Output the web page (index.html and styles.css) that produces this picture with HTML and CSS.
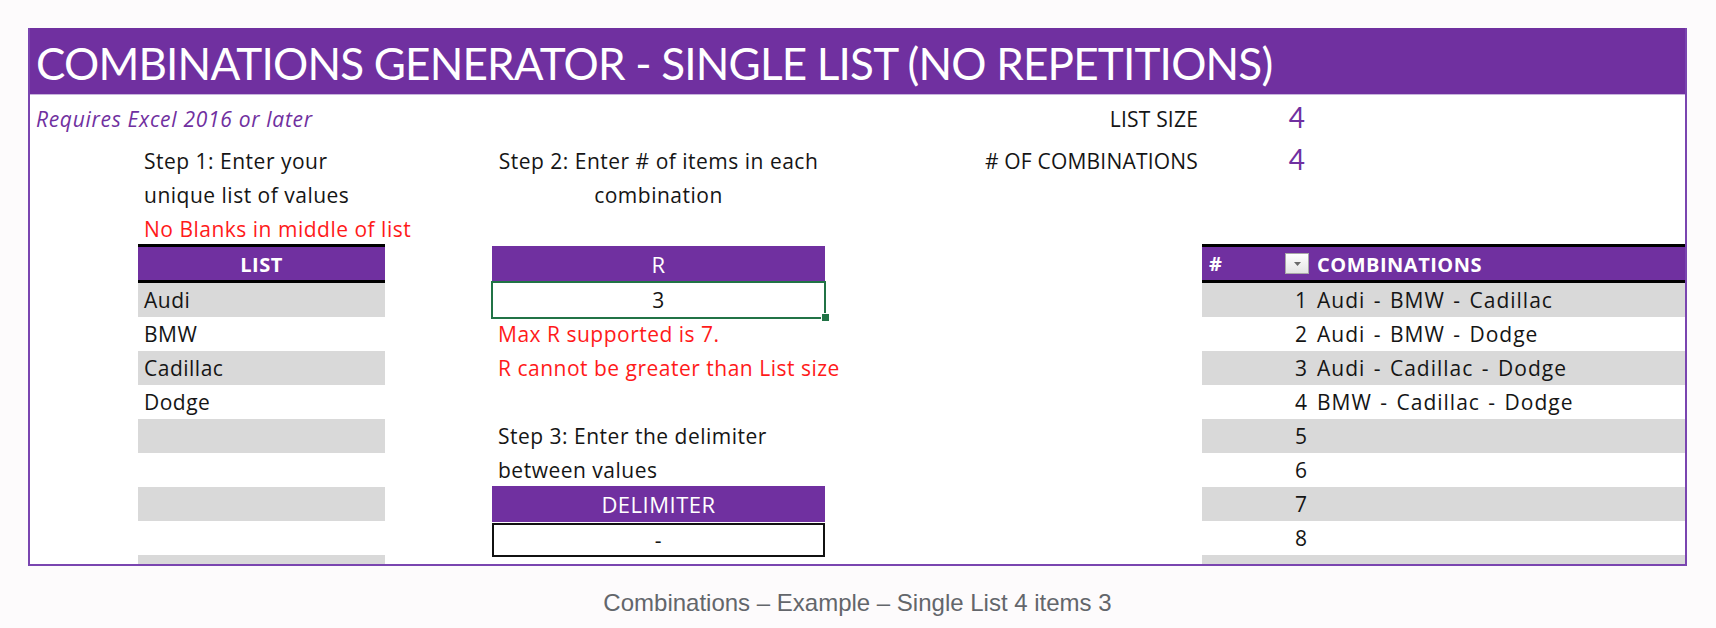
FILE: index.html
```html
<!DOCTYPE html>
<html>
<head>
<meta charset="utf-8">
<link rel="stylesheet" href="styles.css">
</head>
<body>
<figure class="fig">
  <div class="sheet">
    <div class="rowmark"></div>
    <div class="title">COMBINATIONS GENERATOR - SINGLE LIST (NO REPETITIONS)</div>
    <div class="grid">
      <div class="c req r1 ca">Requires Excel 2016 or later</div>
      <div class="c lbl r1 ce">LIST SIZE</div>
      <div class="c big r1 cf">4</div>

      <div class="c txt r2 cb">Step 1: Enter your</div>
      <div class="c step2 cd">Step 2: Enter # of items in each<br>combination</div>
      <div class="c lbl r2 ce">#&nbsp;OF COMBINATIONS</div>
      <div class="c big big2 r2 cf">4</div>

      <div class="c txt r3 cb">unique list of values</div>
      <div class="c txt red r4 cb">No Blanks in middle of list</div>

      <div class="c hdr hdr-list r5 cb">LIST</div>
      <div class="c hdr hdr-r r5 cd">R</div>
      <div class="c hdr hdr-num r5 cf"><span>#</span><span class="filter"><svg width="9" height="6" viewBox="0 0 9 6"><path d="M1 1h7L4.5 5z" fill="#6b6b6b"/></svg></span></div>
      <div class="c hdr hdr-comb r5 cg">COMBINATIONS</div>

      <div class="c txt g r6 cb">Audi</div>
      <div class="c txt r7 cb">BMW</div>
      <div class="c txt g r8 cb">Cadillac</div>
      <div class="c txt r9 cb">Dodge</div>
      <div class="c txt g r10 cb"></div>
      <div class="c txt r11 cb"></div>
      <div class="c txt g r12 cb"></div>
      <div class="c txt r13 cb"></div>
      <div class="c txt g r14 cb"></div>

      <div class="c sel r6 cd">3</div>
      <div class="c txt red r7 cd">Max R supported is 7.</div>
      <div class="c txt red r8 cd">R cannot be greater than List size</div>
      <div class="c txt r10 cd">Step 3: Enter the delimiter</div>
      <div class="c txt r11 cd">between values</div>
      <div class="c hdr hdr-delim r12 cd">DELIMITER</div>
      <div class="c delim r13 cd">-</div>

      <div class="c num g r6 cf">1</div><div class="c txt comb g r6 cg">Audi - BMW - Cadillac</div>
      <div class="c num r7 cf">2</div><div class="c txt comb r7 cg">Audi - BMW - Dodge</div>
      <div class="c num g r8 cf">3</div><div class="c txt comb g r8 cg">Audi - Cadillac - Dodge</div>
      <div class="c num r9 cf">4</div><div class="c txt comb r9 cg">BMW - Cadillac - Dodge</div>
      <div class="c num g r10 cf">5</div><div class="c txt comb g r10 cg"></div>
      <div class="c num r11 cf">6</div><div class="c txt comb r11 cg"></div>
      <div class="c num g r12 cf">7</div><div class="c txt comb g r12 cg"></div>
      <div class="c num r13 cf">8</div><div class="c txt comb r13 cg"></div>
      <div class="c num g r14 cf"></div><div class="c txt comb g r14 cg"></div>
    </div>
  </div>
  <figcaption class="caption">Combinations – Example – Single List 4 items 3</figcaption>
</figure>
</body>
</html>
```

FILE: styles.css
```css
* { box-sizing: border-box; }
html, body { margin: 0; padding: 0; }
body {
  background: #fdfbfc;
  font-family: "Open Sans", "Lato", sans-serif;
  width: 1716px;
  height: 628px;
  overflow: hidden;
}
.fig {
  margin: 0;
  padding: 28px 29px 0 28px;
}
.sheet {
  position: relative;
  height: 538px;
  background: #ffffff;
  border: 2px solid #7a45b0;
  border-top: 0;
  overflow: hidden;
}
.rowmark {
  position: absolute;
  left: -2px;
  top: 254px;
  width: 2px;
  height: 35px;
  background: #217346;
}
.title {
  height: 67px;
  background: #7030a0;
  border-bottom: 1px solid #c8b3dc;
  color: #ffffff;
  font-family: "Lato", "Open Sans", sans-serif;
  font-size: 44px;
  letter-spacing: -0.8px;
  line-height: 66px;
  padding: 2px 0 0 6px;
  white-space: nowrap;
}
.grid {
  display: grid;
  grid-template-columns: 108px 247px 107px 333px 377px 109px 1fr;
  grid-template-rows: 49px 34px 34px 33px 38px repeat(9, 34px);
}
.c {
  font-size: 21px;
  letter-spacing: 0.5px;
  line-height: 34px;
  color: #151515;
  white-space: nowrap;
  min-width: 0;
}
.ca { grid-column: 1 / 5; }
.cb { grid-column: 2; }
.cd { grid-column: 4; }
.ce { grid-column: 5; }
.cf { grid-column: 6; }
.cg { grid-column: 7; }
.r1 { grid-row: 1; }
.r2 { grid-row: 2; }
.r3 { grid-row: 3; }
.r4 { grid-row: 4; }
.r5 { grid-row: 5; }
.r6 { grid-row: 6; }
.r7 { grid-row: 7; }
.r8 { grid-row: 8; }
.r9 { grid-row: 9; }
.r10 { grid-row: 10; }
.r11 { grid-row: 11; }
.r12 { grid-row: 12; }
.r13 { grid-row: 13; }
.r14 { grid-row: 14; }

.txt { padding: 0 0 0 6px; }
.red { color: #ff1a1a; }
.g { background: #d9d9d9; }

.req {
  padding: 7px 0 0 6px;
  color: #7030a0;
  font-style: italic;
  letter-spacing: 0.7px;
}
.lbl {
  text-align: right;
  padding: 7px 4px 0 0;
  letter-spacing: 0.2px;
}
.r2.lbl { padding-top: 0; }
.big {
  font-family: "Lato", "Open Sans", sans-serif;
  font-size: 28px;
  letter-spacing: 0;
  line-height: 34px;
  color: #7030a0;
  text-align: right;
  padding: 5px 6px 0 0;
}
.big2 { padding-top: 0; margin-top: -2px; }

.step2 {
  grid-row: 2 / 4;
  text-align: center;
}

.hdr {
  background: #7030a0;
  color: #ffffff;
  text-align: center;
  line-height: 33px;
}
.hdr-list, .hdr-num, .hdr-comb {
  border-top: 3px solid #000000;
  border-bottom: 3px solid #000000;
  font-weight: 700;
  font-size: 20px;
  line-height: 31px;
  padding-top: 2px;
  margin-top: -1px;
}
.hdr-r {
  margin: 1px 0 2px;
  padding-top: 2px;
  font-size: 22px;
}
.hdr-num {
  display: flex;
  align-items: center;
  justify-content: space-between;
  text-align: left;
  padding: 0 2px 0 7px;
}
.filter {
  width: 24px;
  height: 21px;
  display: flex;
  align-items: center;
  justify-content: center;
  background: linear-gradient(#ffffff, #e4e4e4);
  border: 1px solid #a8a8a8;
}
.hdr-comb {
  text-align: left;
  padding-left: 6px;
}
.hdr-delim {
  margin: -1px 0 0;
  height: 36px;
  line-height: 35px;
  padding-top: 1px;
  font-size: 22px;
}

.sel {
  position: relative;
  text-align: center;
  box-shadow: 0 0 0 2px #217346;
  margin: 0 1px;
}
.sel::after {
  content: "";
  position: absolute;
  right: -6px;
  bottom: -5px;
  width: 7px;
  height: 7px;
  background: #217346;
  border: 1px solid #ffffff;
}
.delim {
  text-align: center;
  border: 2px solid #111111;
  line-height: 30px;
  margin: 2px 0 -2px;
}
.num {
  text-align: right;
  padding: 0 4px 0 0;
  letter-spacing: 0;
}
.comb { padding-left: 6px; letter-spacing: 1px; word-spacing: 2px; }

.caption {
  margin-top: 22px;
  text-align: center;
  font-family: "Liberation Sans", Arial, sans-serif;
  font-size: 24px;
  line-height: 30px;
  color: #63666b;
}
```
